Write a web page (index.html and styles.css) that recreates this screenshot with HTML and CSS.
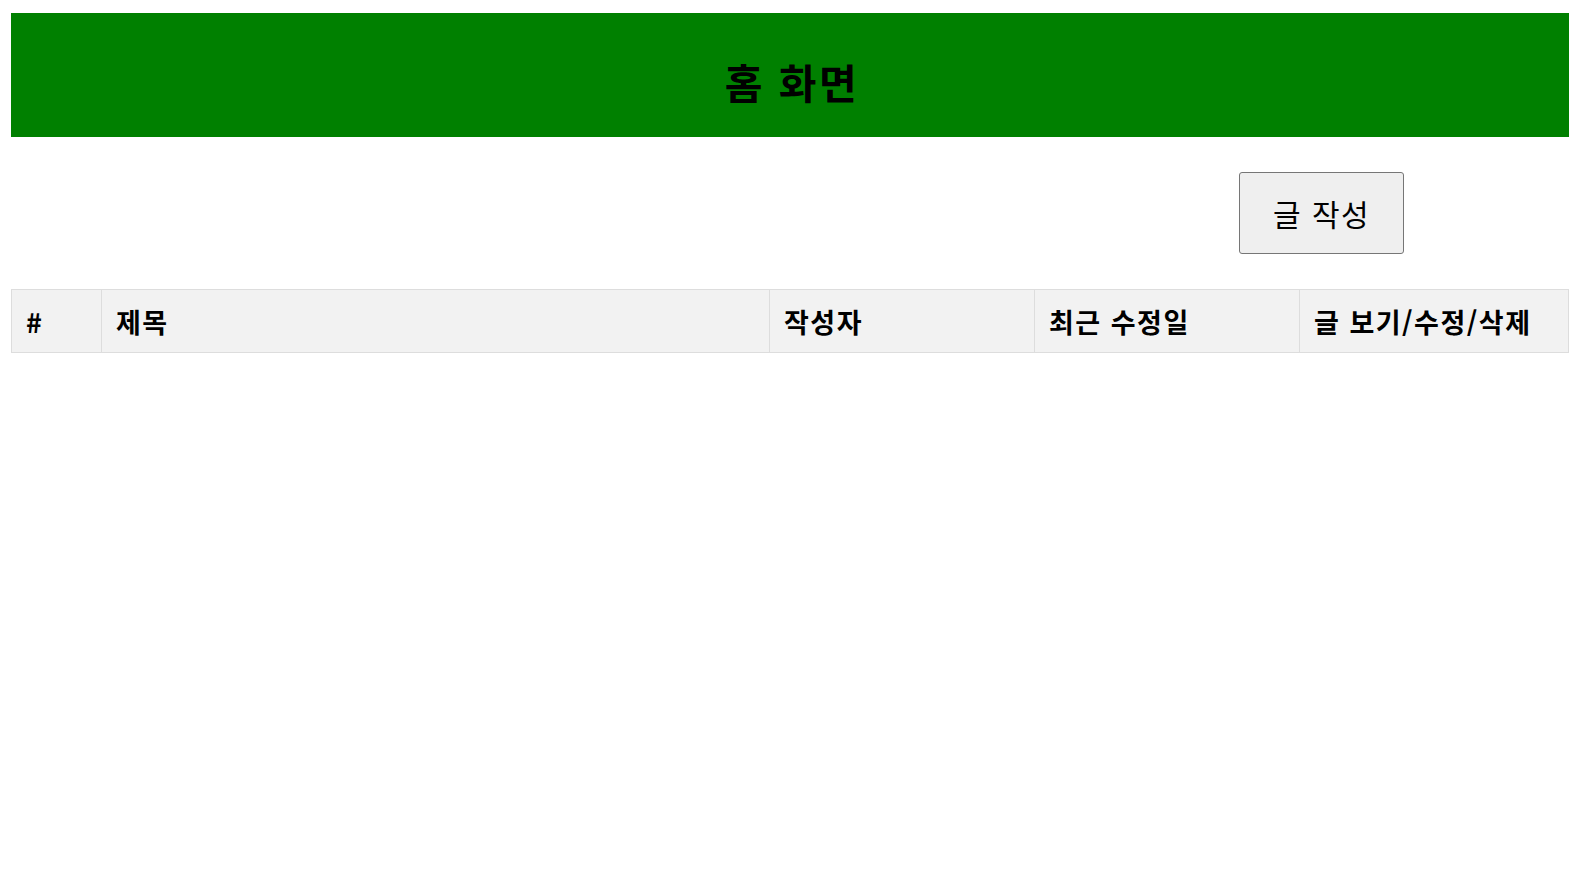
FILE: index.html
```html
<!DOCTYPE html>
<html lang="ko">
<head>
<meta charset="utf-8">
<title>홈 화면</title>
<link rel="stylesheet" href="styles.css">
</head>
<body>
<div class="page">
  <header class="top">
    <h1 class="title">홈 화면</h1>
  </header>
  <div class="actions">
    <button class="write-btn" type="button">글 작성</button>
  </div>
  <table class="board">
    <colgroup>
      <col class="c-num">
      <col class="c-title">
      <col class="c-author">
      <col class="c-date">
      <col class="c-ops">
    </colgroup>
    <thead>
      <tr>
        <th>#</th>
        <th>제목</th>
        <th>작성자</th>
        <th>최근 수정일</th>
        <th>글 보기/수정/삭제</th>
      </tr>
    </thead>
    <tbody></tbody>
  </table>
</div>
</body>
</html>
```

FILE: styles.css
```css
html, body {
  margin: 0;
  padding: 0;
  background: #ffffff;
}

body {
  font-family: "Noto Sans CJK KR", "Noto Sans", sans-serif;
  color: #000000;
}

.page {
  padding: 13px 6px 0 11px;
}

.top {
  height: 124px;
  background: #008000;
  display: flex;
  align-items: center;
  justify-content: center;
}

.title {
  margin: 0;
  font-size: 41px;
  font-weight: 700;
  line-height: 1;
  letter-spacing: 2.5px;
  padding: 12px 0 0 4px;
}

.actions {
  display: flex;
  justify-content: flex-end;
  padding: 35px 165px 35px 0;
}

.write-btn {
  width: 165px;
  height: 82px;
  font-family: "Noto Sans CJK KR", "Noto Sans", sans-serif;
  font-size: 30px;
  letter-spacing: 1.5px;
  color: #000000;
  background: #efefef;
  border: 1px solid #767676;
  border-radius: 3px;
  padding: 0;
  line-height: 1;
}

.board {
  width: calc(100% - 1px);
  border-collapse: collapse;
  table-layout: fixed;
}

.c-num { width: 90px; }
.c-title { width: 668px; }
.c-author { width: 265px; }
.c-date { width: 265px; }
.c-ops { width: 269px; }

.board th {
  background: #f2f2f2;
  border: 1px solid #dddddd;
  height: 62px;
  padding: 0 14px;
  text-align: left;
  font-size: 27px;
  font-weight: 700;
  line-height: 1;
  letter-spacing: 1.5px;
  white-space: nowrap;
}
```
